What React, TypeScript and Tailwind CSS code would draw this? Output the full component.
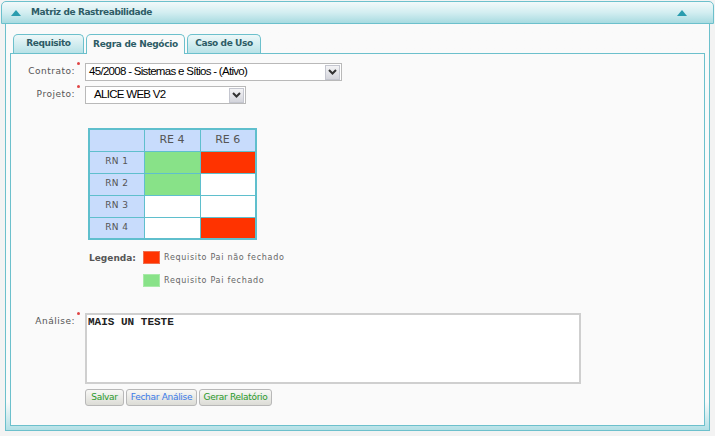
import React from 'react';

const cells: ('green' | 'red' | 'white')[][] = [
  ['green', 'red'],
  ['green', 'white'],
  ['white', 'white'],
  ['white', 'red'],
];

const cellBg = {
  green: 'bg-[#88e288]',
  red: 'bg-[#ff3300]',
  white: 'bg-white',
};

function Asterisk() {
  return <span className="absolute -right-[5px] -top-[3px] w-[3px] h-[3px] rounded-full bg-[#e04545]" />;
}

function Select({ width, value, textPad }: { width: string; value: string; textPad: string }) {
  return (
    <div className={`${width} h-[18px] border border-[#b9b9b9] bg-white flex items-center justify-between`}>
      <span className={`${textPad} text-[11.5px] tracking-[-0.7px] text-black font-['Liberation_Sans',sans-serif] leading-none`}>{value}</span>
      <span className="w-[15px] h-[15px] mr-px bg-gradient-to-b from-[#f4f4f6] to-[#d4d5dc] border border-[#c4c6cf] flex items-center justify-center">
        <svg width="9" height="6" viewBox="0 0 9 6">
          <path d="M1 1 L4.5 4.5 L8 1" stroke="#333" strokeWidth="2" fill="none" />
        </svg>
      </span>
    </div>
  );
}

function Btn({ label, color, width }: { label: string; color: string; width: string }) {
  return (
    <button
      className={`${width} h-[17px] rounded-[3px] border border-[#b8b8b8] bg-gradient-to-b from-[#f8f8f6] to-[#dcdcd6] text-[9px] tracking-[-0.3px] ${color} leading-none`}
    >
      {label}
    </button>
  );
}

export default function App() {
  return (
    <div className="w-[715px] h-[436px] bg-[#f3f3f3] pt-px font-['DejaVu_Sans',sans-serif] overflow-hidden">
      {/* title bar */}
      <div className="mx-px h-[23px] rounded-t-[5px] border border-[#6cc0cc] bg-gradient-to-b from-[#f2f9fa] via-[#d3eef1] to-[#a8dbe1] flex items-center justify-between pl-[9px] pr-[26px]">
        <div className="flex items-center gap-[10px]">
          <svg width="10" height="6" viewBox="0 0 10 6">
            <path d="M0 6 L5 0 L10 6 Z" fill="#2a9cae" />
          </svg>
          <span className="text-[9px] tracking-[-0.4px] font-bold text-[#2d5c66]">Matriz de Rastreabilidade</span>
        </div>
        <svg width="10" height="6" viewBox="0 0 10 6">
          <path d="M0 6 L5 0 L10 6 Z" fill="#2a9cae" />
        </svg>
      </div>

      {/* panel */}
      <div className="mx-[5px] h-[407px] border-x border-b border-[#6cc0cc] bg-gradient-to-b from-[#fafafa] from-[93%] to-[#b2e0e6] px-[4px] pb-[4px] pt-[9px] flex flex-col">
        {/* tabs */}
        <div className="flex items-end gap-[2px] pl-[3px] h-[20px]">
          <div className="w-[71px] h-[19px] rounded-t-[5px] border border-b-0 border-[#6cc0cc] bg-gradient-to-b from-[#eef8f9] to-[#b8e2e7] flex items-center justify-center text-[9px] tracking-[-0.4px] font-bold text-[#2d5c66]">
            Requisito
          </div>
          <div className="w-[99px] h-[20px] rounded-t-[5px] border border-b-0 border-[#6cc0cc] bg-[#fafafa] flex items-center justify-center text-[9px] tracking-[-0.3px] font-bold text-[#2d5c66] relative top-px">
            Regra de Negócio
          </div>
          <div className="w-[74px] h-[19px] rounded-t-[5px] border border-b-0 border-[#6cc0cc] bg-gradient-to-b from-[#eef8f9] to-[#b8e2e7] flex items-center justify-center text-[9px] tracking-[-0.4px] font-bold text-[#2d5c66]">
            Caso de Uso
          </div>
        </div>

        {/* tab content */}
        <div className="flex-1 border border-[#6cc0cc] bg-[#fafafa] pt-[9px]">
          <div className="flex items-center">
            <div className="w-[64px] text-right text-[9px] text-[#555] tracking-[0.5px] relative">
              Contrato:
              <Asterisk />
            </div>
            <div className="ml-[10px]">
              <Select width="w-[257px]" value="45/2008 - Sistemas e Sítios - (Ativo)" textPad="pl-[3px]" />
            </div>
          </div>
          <div className="flex items-center mt-[5px]">
            <div className="w-[64px] text-right text-[9px] text-[#555] tracking-[0.5px] relative">
              Projeto:
              <Asterisk />
            </div>
            <div className="ml-[10px]">
              <Select width="w-[161px]" value="ALICE WEB V2" textPad="pl-[8px]" />
            </div>
          </div>

          {/* matrix */}
          <table className="ml-[77px] mt-[24px] border-collapse border-2 border-[#5fbfcd] text-[#555]">
            <thead>
              <tr className="h-[22px]">
                <th className="w-[55px] bg-[#c8dcfc] border border-[#5fbfcd]" />
                <th className="w-[56px] bg-[#c8dcfc] border border-[#5fbfcd] text-[11px] font-normal">RE 4</th>
                <th className="w-[56px] bg-[#c8dcfc] border border-[#5fbfcd] text-[11px] font-normal">RE 6</th>
              </tr>
            </thead>
            <tbody>
              {cells.map((row, i) => (
                <tr key={i} className="h-[22px]">
                  <td className="bg-[#c8dcfc] border border-[#5fbfcd] text-center text-[9px] tracking-[0.4px]">RN {i + 1}</td>
                  {row.map((c, j) => (
                    <td key={j} className={`${cellBg[c]} border border-[#5fbfcd]`} />
                  ))}
                </tr>
              ))}
            </tbody>
          </table>

          {/* legend */}
          <div className="ml-[78px] mt-[11px] flex">
            <span className="text-[9px] font-bold text-[#555] w-[54px] leading-[14px]">Legenda:</span>
            <div className="flex flex-col gap-[10px]">
              <div className="flex items-center gap-[4px]">
                <span className="w-[17px] h-[13px] bg-[#ff3300] border border-[#f07050]" />
                <span className="text-[8px] text-[#666] tracking-[0.7px]">Requisito Pai não fechado</span>
              </div>
              <div className="flex items-center gap-[4px]">
                <span className="w-[17px] h-[13px] bg-[#88e288] border border-[#a8eaa8]" />
                <span className="text-[8px] text-[#666] tracking-[0.7px]">Requisito Pai fechado</span>
              </div>
            </div>
          </div>

          {/* analise */}
          <div className="flex items-start mt-[26px]">
            <div className="w-[64px] text-right text-[9px] text-[#555] tracking-[0.5px] relative mt-[2px]">
              Análise:
              <Asterisk />
            </div>
            <div className="ml-[10px] flex flex-col gap-[5px]">
              <div className="w-[496px] h-[71px] border-2 border-[#cfcfcf] bg-white px-[1px] pt-0 text-[11px] leading-[14px]">
                <span className="font-['Liberation_Mono',monospace] font-bold text-[11px] leading-[14px] text-[#222]">MAIS UN TESTE</span>
              </div>
              <div className="flex gap-[2px]">
                <Btn label="Salvar" color="text-[#2a9a2a]" width="w-[39px]" />
                <Btn label="Fechar Análise" color="text-[#3a7ae8]" width="w-[71px]" />
                <Btn label="Gerar Relatório" color="text-[#2a9a2a]" width="w-[73px]" />
              </div>
            </div>
          </div>
        </div>
      </div>
    </div>
  );
}
